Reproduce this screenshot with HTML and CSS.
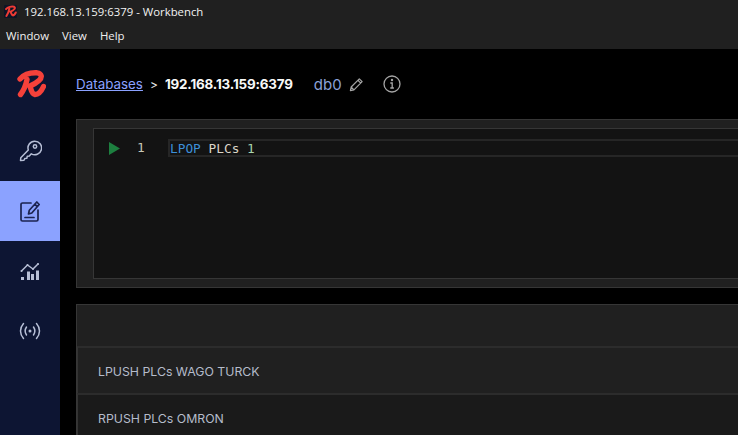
FILE: index.html
```html
<!DOCTYPE html>
<html lang="en">
<head>
<meta charset="utf-8">
<title>192.168.13.159:6379 - Workbench</title>
<link rel="stylesheet" href="styles.css">
</head>
<body>
<header class="titlebar">
  <svg class="app-icon" viewBox="0 0 32 32"><rect width="32" height="32" rx="3" fill="#0e1526"/><path d="M5 10C9 5 19 2.500 25 4.500C29 7 26 12 16 16.500C18 20 18.500 25 21.500 25.500C24.500 25.500 27 23 29 18.500M13 9.500C12 15 9.500 22 6 27" fill="none" stroke="#ee3b34" stroke-width="5" stroke-linecap="round" stroke-linejoin="round"/></svg>
  <span class="title-text">192.168.13.159:6379 - Workbench</span>
</header>
<nav class="menubar"><span>Window</span><span>View</span><span>Help</span></nav>
<div class="app">
  <aside class="sidebar">
    <div class="side-item logo">
      <svg width="32" height="32" viewBox="0 0 32 32"><path d="M6 10C10 5.500 17 3.500 23 3.800C28 4.500 28.500 8.500 25 11.500C22.500 13.800 19.500 15.500 16 17C17 20.500 17.500 25 21 25.500C24.500 25.500 27.500 22 29.500 17.500M13 10.500C12 15.500 10 21 6.500 25.500" fill="none" stroke="#f5413a" stroke-width="5.400" stroke-linecap="round" stroke-linejoin="round"/></svg>
    </div>
    <div class="side-item">
      <svg class="side-icon" viewBox="0 0 24 24"><path d="M10.300 11L2.800 18.800 2.500 21.500 6 21.300 6.800 19.500 8.800 19.300 9.300 17.300 11.300 17 13.300 14.800A6.800 6.800 0 1 0 10.300 11z"/><circle cx="17" cy="7.500" r="1.700"/></svg>
    </div>
    <div class="side-item active">
      <svg class="side-icon" viewBox="0 0 24 24"><path d="M13 4H4.500A1.500 1.500 0 0 0 3 5.500V20.500A1.500 1.500 0 0 0 4.500 22H18.500A1.500 1.500 0 0 0 20 20.500V11"/><path d="M10.500 15l.8-3.800L18.800 3l2.400 2.500-7.400 8.500zM16.800 5.200l2.400 2.500M7 18.500h9"/></svg>
    </div>
    <div class="side-item">
      <svg class="side-icon" viewBox="0 0 24 24"><path class="thick" d="M4.500 21v-3M10.500 21v-8.500M14.500 21v-6M19.500 21v-9.500"/><path d="M3.500 12L9.500 6l5.500 4 5-5"/><circle class="dot" cx="3.500" cy="12" r="1"/><circle class="dot" cx="9.500" cy="6" r="1"/><circle class="dot" cx="15" cy="10" r="1"/><circle class="dot" cx="20" cy="5" r="1"/></svg>
    </div>
    <div class="side-item">
      <svg class="side-icon" viewBox="0 0 24 24"><path d="M5.500 4.500C1.500 9 1.500 15 5.500 19.500M18.500 4.500C22.500 9 22.500 15 18.500 19.500M8.500 8C6.800 10.500 6.800 13.500 8.500 16M15.500 8C17.200 10.500 17.200 13.500 15.500 16"/><circle class="dot" cx="12" cy="12" r="1.500"/></svg>
    </div>
  </aside>
  <main class="main">
    <div class="breadcrumb">
      <a class="crumb-link">Databases</a>
      <span class="crumb-sep">&gt;</span>
      <strong class="crumb-host">192.168.13.159:6379</strong>
      <span class="crumb-db">db0</span>
      <svg class="crumb-edit" viewBox="0 0 16 16"><path d="M1.500 14.500l.8-3.800L11 2l3 3-8.700 8.700zM2.300 10.700l3 3M9.500 3.500l3 3"/></svg>
      <svg class="crumb-info" viewBox="0 0 18 18"><circle cx="9" cy="9" r="8"/><path d="M7.300 8h1.900v5M7.300 13h3.600"/><circle class="info-dot" cx="9" cy="5" r="1.200"/></svg>
    </div>
    <section class="editor-panel">
      <div class="editor">
        <svg class="run" viewBox="0 0 11 13"><path d="M0 0L11 6.500L0 13z"/></svg>
        <span class="line-no">1</span>
        <div class="code-line"><span class="kw">LPOP</span> <span class="plain">PLCs</span> <span class="num">1</span></div>
      </div>
    </section>
    <section class="history">
      <div class="history-top"></div>
      <div class="history-row alt">LPUSH PLCs WAGO TURCK</div>
      <div class="history-row">RPUSH PLCs OMRON</div>
    </section>
  </main>
</div>
</body>
</html>
```
FILE: styles.css
```css
* { box-sizing: border-box; }
html, body { margin: 0; height: 100%; overflow: hidden; background: #000; }
body { display: flex; flex-direction: column; font-family: Inter, "Liberation Sans", sans-serif; }

.titlebar { height: 24px; flex: none; background: #202020; display: flex; align-items: center; gap: 7px; padding: 0 0 2px 4px; color: #f2f2f2; font: 11.350px "Open Sans", sans-serif; }
.app-icon { width: 13px; height: 13px; }
.title-text { white-space: nowrap; }
.menubar { height: 25px; flex: none; background: #202020; display: flex; align-items: center; gap: 13px; padding: 0 0 3px 6px; color: #efefef; font: 11.400px "Open Sans", sans-serif; }

.app { flex: 1; min-height: 0; display: flex; }
.sidebar { width: 60px; flex: none; background: #0d1533; display: flex; flex-direction: column; }
.side-item { height: 60px; display: flex; align-items: center; justify-content: center; flex: none; }
.side-item.logo { height: 72px; }
.side-item.active { background: #8ba2ff; }
.side-icon { width: 24px; height: 24px; fill: none; stroke: #b7bfd6; stroke-width: 1.500; stroke-linecap: round; stroke-linejoin: round; }
.side-item.active .side-icon { stroke: #1b2350; stroke-width: 1.700; }
.side-icon .dot { fill: #b7bfd6; stroke: none; }
.side-icon .thick { stroke-width: 3; stroke-linecap: butt; }

.main { flex: 1; min-width: 0; padding: 0 0 0 16px; overflow: hidden; }
.breadcrumb { height: 70px; display: flex; align-items: center; font-size: 13.400px; white-space: nowrap; }
.crumb-link { color: #8ba2ff; text-decoration: underline; }
.crumb-sep { color: #e8e8e8; margin: 0 7px; font-size: 12px; }
.crumb-host { color: #f8f8f8; font-weight: 700; letter-spacing: -.16px; }
.crumb-db { color: #8aa0d8; margin-left: 21px; font-weight: 400; font-size: 15px; }
.crumb-edit { width: 15px; height: 15px; margin-left: 7px; fill: none; stroke: #a5a5a5; stroke-width: 1.300; stroke-linejoin: round; }
.crumb-info { width: 18px; height: 18px; margin-left: 19px; fill: none; stroke: #a5a5a5; stroke-width: 1.300; }
.crumb-info .info-dot { fill: #a5a5a5; stroke: none; }

.editor-panel { width: 760px; height: 169px; background: #202020; border: 1px solid #363636; padding: 8px 0 8px 16px; }
.editor { height: 100%; background: #131313; border: 1px solid #363636; padding: 10px 0 0 15px; display: flex; align-items: flex-start; font: 12.800px/18px "DejaVu Sans Mono", monospace; }
.run { width: 11px; height: 13px; margin-top: 3px; flex: none; fill: #1d7f3f; }
.line-no { color: #c9c9b8; margin-left: 17px; width: 31px; flex: none; font-size: 12.800px; }
.code-line { flex: 1; height: 18px; border: 2px solid #262626; border-right: 0; line-height: 15px; white-space: pre; }
.kw { color: #3d8fd9; }
.plain { color: #dbd6c8; }
.num { color: #a9d6ae; }

.history { width: 760px; margin-top: 16px; background: #202020; border: 1px solid #363636; border-bottom: 0; }
.history-top { height: 41px; }
.history-row { height: 47px; padding: 2px 0 0 20px; display: flex; align-items: center; font-size: 12.300px; color: #b5bccb; background: #1a1a1a; border-top: 2px solid #2c2c2c; border-left: 1px solid #333; }
.history-row.alt { background: #202020; }
```
